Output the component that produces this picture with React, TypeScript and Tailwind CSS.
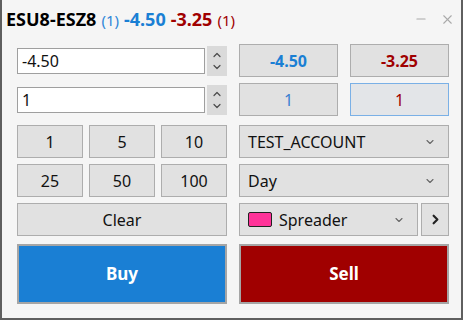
import { ChevronDown, ChevronUp, ChevronRight, X, Minus } from 'lucide-react'

const btn =
  'flex items-center justify-center bg-[#e1e1e1] border border-[#adadad] text-[16px] h-[33px]'

function Spinner() {
  return (
    <div className="flex flex-col items-center justify-center w-[20px] h-[30px] bg-[#dadada] text-[#4a4a4a]">
      <ChevronUp size={12} strokeWidth={2.4} />
      <ChevronDown size={12} strokeWidth={2.4} />
    </div>
  )
}

function NumInput({ value }: { value: string }) {
  return (
    <div className="flex items-center h-[33px] gap-[2px]">
      <div className="flex items-center flex-1 h-[26px] bg-white border border-[#9f9f9f] px-[4px] text-[16px] text-[#111]">
        {value}
      </div>
      <Spinner />
    </div>
  )
}

function Select({ label, swatch }: { label: string; swatch?: boolean }) {
  return (
    <div className="flex items-center flex-1 h-[33px] bg-[#e1e1e1] border border-[#adadad] pl-[8px] pr-[12px] text-[16px] text-[#111]">
      {swatch && <span className="w-[24px] h-[15px] mr-[7px] rounded-[2px] bg-[#ff3399] border border-[#222]" />}
      <span className="flex-1">{label}</span>
      <ChevronDown size={12} strokeWidth={2.2} className="text-[#666]" />
    </div>
  )
}

export default function App() {
  return (
    <div
      className="w-[463px] h-[320px] bg-[#f5f5f5] border-x-2 border-b-2 border-[#5f5f5f] flex flex-col"
      style={{ fontFamily: '"Noto Sans", "Open Sans", sans-serif' }}
    >
      <div className="flex items-center h-[38px] pl-[4px] pr-[6px]">
        <div className="flex items-baseline gap-[5px] whitespace-nowrap">
          <span className="font-bold text-[18px] text-black">ESU8-ESZ8</span>
          <span className="text-[15px] text-[#2f86d8]">(1)</span>
          <span className="font-bold text-[18px] text-[#1a7fd4]">-4.50</span>
          <span className="font-bold text-[18px] text-[#a00000]">-3.25</span>
          <span className="text-[15px] text-[#a00000]">(1)</span>
        </div>
        <div className="flex-1" />
        <Minus size={14} strokeWidth={2} className="text-[#aaa] mr-[12px]" />
        <X size={15} strokeWidth={1.8} className="text-[#aaa]" />
      </div>

      <div className="grid grid-cols-2 gap-x-[12px] pl-[15px] pr-[12px] mt-[6px]">
        <div className="flex flex-col">
          <NumInput value="-4.50" />
          <div className="mt-[6px]">
            <NumInput value="1" />
          </div>
          <div className="grid grid-cols-3 gap-x-[6px] gap-y-[6px] mt-[9px] text-[#111]">
            <div className={btn}>1</div>
            <div className={btn}>5</div>
            <div className={btn}>10</div>
            <div className={btn}>25</div>
            <div className={btn}>50</div>
            <div className={btn}>100</div>
          </div>
          <div className={`${btn} mt-[6px] text-[#111]`}>Clear</div>
        </div>

        <div className="flex flex-col">
          <div className="grid grid-cols-2 gap-x-[12px]">
            <div className={`${btn} font-bold text-[#1a7fd4]`}>-4.50</div>
            <div className={`${btn} font-bold text-[#a00000]`}>-3.25</div>
          </div>
          <div className="grid grid-cols-2 gap-x-[12px] mt-[6px]">
            <div className={`${btn} text-[#3a7fd0]`}>1</div>
            <div className="flex items-center justify-center h-[33px] bg-[#e3e5e8] border border-[#7ab0e6] text-[16px] text-[#a00000]">
              1
            </div>
          </div>
          <div className="flex mt-[9px]">
            <Select label="TEST_ACCOUNT" />
          </div>
          <div className="flex mt-[6px]">
            <Select label="Day" />
          </div>
          <div className="flex gap-[3px] mt-[6px]">
            <Select label="Spreader" swatch />
            <div className="flex items-center justify-center w-[28px] h-[33px] bg-[#e1e1e1] border border-[#adadad] text-[#222]">
              <ChevronRight size={15} strokeWidth={3.5} />
            </div>
          </div>
        </div>

        <div className="flex items-center justify-center h-[60px] mt-[8px] bg-[#1a7fd4] border-2 border-[#a5a5a5] text-white font-bold text-[17px]">
          Buy
        </div>
        <div className="flex items-center justify-center h-[60px] mt-[8px] bg-[#a00000] border-2 border-[#a5a5a5] text-white font-bold text-[17px]">
          Sell
        </div>
      </div>
    </div>
  )
}
